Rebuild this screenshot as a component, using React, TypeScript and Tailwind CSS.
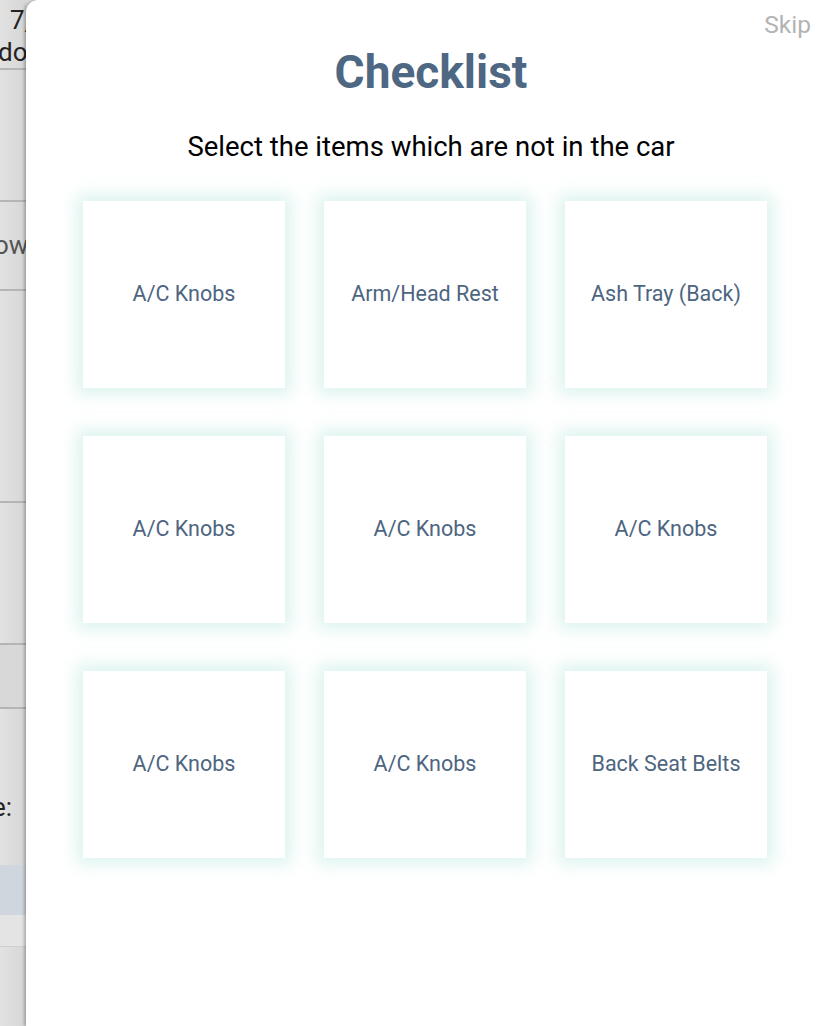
const items = [
  "A/C Knobs",
  "Arm/Head Rest",
  "Ash Tray (Back)",
  "A/C Knobs",
  "A/C Knobs",
  "A/C Knobs",
  "A/C Knobs",
  "A/C Knobs",
  "Back Seat Belts",
];

function ItemCard({ label }: { label: string }) {
  return (
    <button className="flex h-[187px] items-center justify-center bg-white text-[21.5px] text-[#4d6580] shadow-[0_0_16px_6px_rgba(204,238,231,0.7)]">
      {label}
    </button>
  );
}

export default function App() {
  return (
    <div className="relative h-[1026px] w-[836px] overflow-hidden bg-[#dedede] font-['Roboto',sans-serif]">
      {/* page behind the sheet */}
      <div className="flex w-[26px] flex-col bg-gradient-to-r from-[#e2e2e2] to-[#d6d6d6] text-[26px] text-[#222]">
        <div className="h-[70px] border-b-2 border-[#b5b5b5] pt-[4px] leading-[32px]">
          <div className="ml-[10px]">7,</div>
          <div className="ml-[-2px]">do</div>
        </div>
        <div className="h-[132px] border-b-2 border-[#b5b5b5]" />
        <div className="flex h-[89px] items-center border-b-2 border-[#b5b5b5] text-[#555]">
          <span className="ml-[-6px]">ow</span>
        </div>
        <div className="h-[212px] border-b-2 border-[#b5b5b5]" />
        <div className="h-[142px] border-b-2 border-[#b5b5b5]" />
        <div className="h-[64px] border-b-2 border-[#b5b5b5] bg-[#d8d8d8]" />
        <div className="flex h-[156px] items-center pt-[40px]">
          <span className="ml-[-8px]">e:</span>
        </div>
        <div className="h-[50px] bg-[#cfd6de]" />
        <div className="h-[32px] border-b border-[#cfcfcf] bg-[#e4e4e4]" />
        <div className="h-[80px]" />
      </div>

      {/* checklist sheet */}
      <div className="absolute top-0 right-0 bottom-0 left-[26px] rounded-tl-[12px] bg-white shadow-[-2px_0_3px_rgba(0,0,0,0.25)]">
        <div className="flex justify-end pt-[10px] pr-[25px]">
          <button className="text-[24.5px] leading-[30px] text-[#b3b3b3]">Skip</button>
        </div>
        <h1 className="mt-[5px] text-center text-[46px] leading-[54px] font-bold text-[#4e6782]">
          Checklist
        </h1>
        <p className="mt-[31px] text-center text-[27.5px] leading-[34px] text-black">
          Select the items which are not in the car
        </p>
        <div className="mt-[37px] grid grid-cols-3 gap-x-[39px] gap-y-[48px] pr-[69px] pl-[57px]">
          {items.map((label, i) => (
            <ItemCard key={i} label={label} />
          ))}
        </div>
      </div>
    </div>
  );
}
